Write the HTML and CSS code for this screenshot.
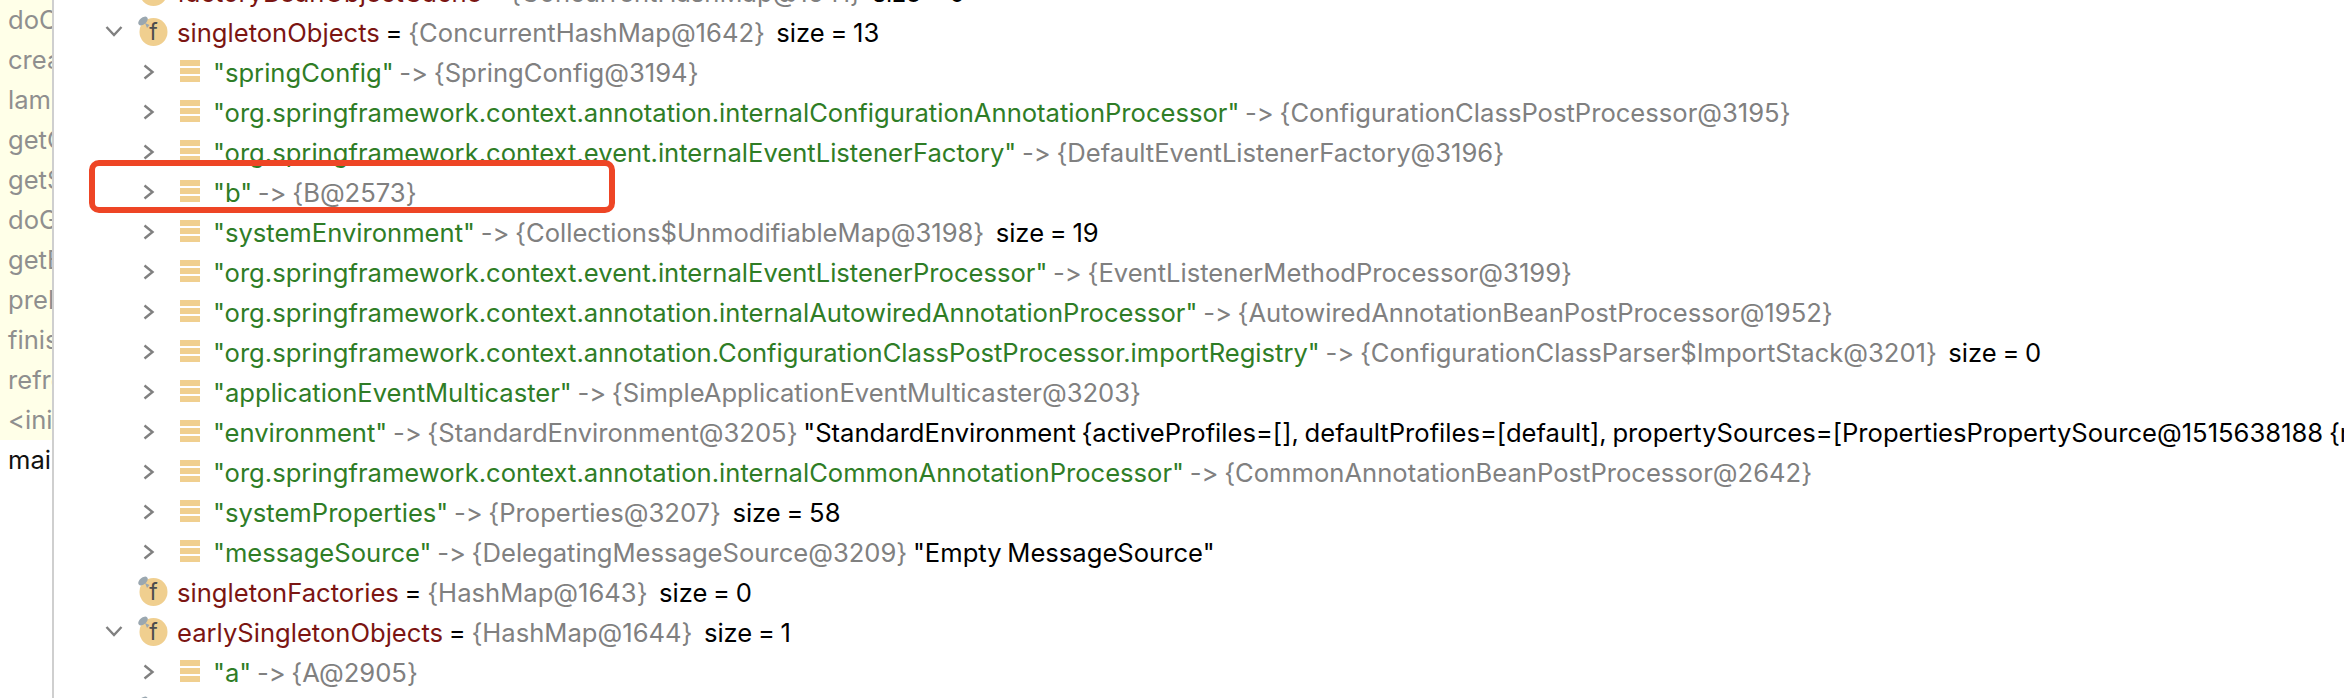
FILE: index.html
```html
<!DOCTYPE html>
<html lang="en">
<head>
<meta charset="utf-8">
<title>Variables</title>
<link rel="stylesheet" href="styles.css">
</head>
<body>
<svg class="defs" width="0" height="0" aria-hidden="true">
  <defs>
    <symbol id="i-right" viewBox="0 0 12 16"><path d="M1.500 1.500 L9.500 8 L1.500 14.500" fill="none" stroke="#808080" stroke-width="2.400"/></symbol>
    <symbol id="i-down" viewBox="0 0 18 12"><path d="M1.500 2 L9 10 L16.500 2" fill="none" stroke="#808080" stroke-width="2.400"/></symbol>
    <symbol id="i-entry" viewBox="0 0 20 22"><rect x="0" y="0" width="20" height="6" fill="#f0cf8f"/><rect x="0" y="8" width="20" height="6" fill="#f0cf8f"/><rect x="0" y="16" width="20" height="6" fill="#f0cf8f"/></symbol>
    <symbol id="i-field" viewBox="0 0 32 32"><circle cx="16.500" cy="16" r="14" fill="#f0cf8f"/><text x="16.500" y="24" class="f-letter" text-anchor="middle">f</text><ellipse cx="6" cy="5" rx="5.500" ry="3.400" transform="rotate(-40 6 5)" fill="#9aa7b0"/><path d="M8 7 L12.500 9 L10 12 Z" fill="#9aa7b0"/></symbol>
  </defs>
</svg>
<div class="window">
  <aside class="frames">
    <div class="frame">doCreateBean</div>
    <div class="frame">createBean</div>
    <div class="frame">lambda$doGetBean</div>
    <div class="frame">getObject</div>
    <div class="frame">getSingleton</div>
    <div class="frame">doGetBean</div>
    <div class="frame">getBean</div>
    <div class="frame">preInstantiate</div>
    <div class="frame">finishBeanFactory</div>
    <div class="frame">refresh</div>
    <div class="frame">&lt;init&gt;</div>
    <div class="frame frame-main">main</div>
  </aside>
  <main class="tree">
    <div class="row l1"><span class="tw"></span><svg class="ic-field"><use href="#i-field"/></svg><span class="t"><span class="name">factoryBeanObjectCache</span> = <span class="ref">{ConcurrentHashMap@1641}</span>  size = 0</span></div>
    <div class="row l1"><svg class="tw-down"><use href="#i-down"/></svg><svg class="ic-field"><use href="#i-field"/></svg><span class="t"><span class="name">singletonObjects</span> = <span class="ref">{ConcurrentHashMap@1642}</span>  size = 13</span></div>
    <div class="row l2"><svg class="tw-right"><use href="#i-right"/></svg><svg class="ic-entry"><use href="#i-entry"/></svg><span class="t"><span class="key">"springConfig"</span> <span class="ref">-&gt; {SpringConfig@3194}</span></span></div>
    <div class="row l2"><svg class="tw-right"><use href="#i-right"/></svg><svg class="ic-entry"><use href="#i-entry"/></svg><span class="t"><span class="key">"org.springframework.context.annotation.internalConfigurationAnnotationProcessor"</span> <span class="ref">-&gt; {ConfigurationClassPostProcessor@3195}</span></span></div>
    <div class="row l2"><svg class="tw-right"><use href="#i-right"/></svg><svg class="ic-entry"><use href="#i-entry"/></svg><span class="t"><span class="key">"org.springframework.context.event.internalEventListenerFactory"</span> <span class="ref">-&gt; {DefaultEventListenerFactory@3196}</span></span></div>
    <div class="row l2"><svg class="tw-right"><use href="#i-right"/></svg><svg class="ic-entry"><use href="#i-entry"/></svg><span class="t"><span class="key">"b"</span> <span class="ref">-&gt; {B@2573}</span></span><div class="highlight"></div></div>
    <div class="row l2"><svg class="tw-right"><use href="#i-right"/></svg><svg class="ic-entry"><use href="#i-entry"/></svg><span class="t"><span class="key">"systemEnvironment"</span> <span class="ref">-&gt; {Collections$UnmodifiableMap@3198}</span>  size = 19</span></div>
    <div class="row l2"><svg class="tw-right"><use href="#i-right"/></svg><svg class="ic-entry"><use href="#i-entry"/></svg><span class="t"><span class="key">"org.springframework.context.event.internalEventListenerProcessor"</span> <span class="ref">-&gt; {EventListenerMethodProcessor@3199}</span></span></div>
    <div class="row l2"><svg class="tw-right"><use href="#i-right"/></svg><svg class="ic-entry"><use href="#i-entry"/></svg><span class="t"><span class="key">"org.springframework.context.annotation.internalAutowiredAnnotationProcessor"</span> <span class="ref">-&gt; {AutowiredAnnotationBeanPostProcessor@1952}</span></span></div>
    <div class="row l2"><svg class="tw-right"><use href="#i-right"/></svg><svg class="ic-entry"><use href="#i-entry"/></svg><span class="t"><span class="key">"org.springframework.context.annotation.ConfigurationClassPostProcessor.importRegistry"</span> <span class="ref">-&gt; {ConfigurationClassParser$ImportStack@3201}</span>  size = 0</span></div>
    <div class="row l2"><svg class="tw-right"><use href="#i-right"/></svg><svg class="ic-entry"><use href="#i-entry"/></svg><span class="t"><span class="key">"applicationEventMulticaster"</span> <span class="ref">-&gt; {SimpleApplicationEventMulticaster@3203}</span></span></div>
    <div class="row l2"><svg class="tw-right"><use href="#i-right"/></svg><svg class="ic-entry"><use href="#i-entry"/></svg><span class="t"><span class="key">"environment"</span> <span class="ref">-&gt; {StandardEnvironment@3205}</span> "StandardEnvironment {activeProfiles=[], defaultProfiles=[default], propertySources=[PropertiesPropertySource@1515638188 {name='systemProperties'</span></div>
    <div class="row l2"><svg class="tw-right"><use href="#i-right"/></svg><svg class="ic-entry"><use href="#i-entry"/></svg><span class="t"><span class="key">"org.springframework.context.annotation.internalCommonAnnotationProcessor"</span> <span class="ref">-&gt; {CommonAnnotationBeanPostProcessor@2642}</span></span></div>
    <div class="row l2"><svg class="tw-right"><use href="#i-right"/></svg><svg class="ic-entry"><use href="#i-entry"/></svg><span class="t"><span class="key">"systemProperties"</span> <span class="ref">-&gt; {Properties@3207}</span>  size = 58</span></div>
    <div class="row l2"><svg class="tw-right"><use href="#i-right"/></svg><svg class="ic-entry"><use href="#i-entry"/></svg><span class="t"><span class="key">"messageSource"</span> <span class="ref">-&gt; {DelegatingMessageSource@3209}</span> "Empty MessageSource"</span></div>
    <div class="row l1"><span class="tw"></span><svg class="ic-field"><use href="#i-field"/></svg><span class="t"><span class="name">singletonFactories</span> = <span class="ref">{HashMap@1643}</span>  size = 0</span></div>
    <div class="row l1"><svg class="tw-down"><use href="#i-down"/></svg><svg class="ic-field"><use href="#i-field"/></svg><span class="t"><span class="name">earlySingletonObjects</span> = <span class="ref">{HashMap@1644}</span>  size = 1</span></div>
    <div class="row l2"><svg class="tw-right"><use href="#i-right"/></svg><svg class="ic-entry"><use href="#i-entry"/></svg><span class="t"><span class="key">"a"</span> <span class="ref">-&gt; {A@2905}</span></span></div>
    <div class="row l1"><span class="tw"></span><svg class="ic-field"><use href="#i-field"/></svg><span class="t"></span></div>
  </main>
</div>
</body>
</html>
```
FILE: styles.css
```css
html, body {
  margin: 0;
  padding: 0;
  background: #fff;
}
body {
  width: 2344px;
  height: 698px;
  overflow: hidden;
  font-family: Inter, "Liberation Sans", Arial, sans-serif;
  font-size: 25.6px;
  font-variant-ligatures: none;
  font-feature-settings: "calt" 0, "liga" 0;
  color: #000;
}
.defs { position: absolute; }
.window {
  display: flex;
  height: 698px;
  overflow: hidden;
}
.frames {
  flex: 0 0 52px;
  width: 52px;
  overflow: hidden;
  background: #ffffe8;
  border-right: 2px solid #cfcfcf;
  color: #8f8f8f;
}
.frame {
  height: 40px;
  line-height: 40px;
  padding-left: 8px;
  white-space: nowrap;
}
.frame-main {
  background: #fff;
  color: #111;
  height: 260px;
}
.tree {
  flex: 1;
  min-width: 0;
  overflow: hidden;
  margin-top: -28px;
}
.row {
  position: relative;
  display: flex;
  align-items: center;
  height: 40px;
  white-space: pre;
}
.l1 { padding-left: 51px; }
.l2 { padding-left: 89px; }
.tw { width: 32px; flex: none; }
.tw-down { width: 18px; height: 12px; margin-right: 14px; flex: none; margin-top: -3px; }
.tw-right { width: 12px; height: 16px; margin-right: 25px; flex: none; }
.ic-field { width: 32px; height: 32px; margin-right: 8px; flex: none; }
.ic-entry { width: 20px; height: 22px; margin-right: 13px; flex: none; margin-top: -2px; }
.f-letter {
  font-family: Inter, "Liberation Sans", Arial, sans-serif;
  font-size: 23px;
  fill: #4d4d4d;
}
.t { line-height: 40px; padding-top: 2px; word-spacing: -1.5px; }
.name { color: #7b1512; }
.key { color: #2f7d26; }
.ref { color: #808080; }
.highlight {
  position: absolute;
  left: 35px;
  top: -12px;
  width: 526px;
  height: 53px;
  box-sizing: border-box;
  border: 6px solid #ee4525;
  border-radius: 10px;
}
```
